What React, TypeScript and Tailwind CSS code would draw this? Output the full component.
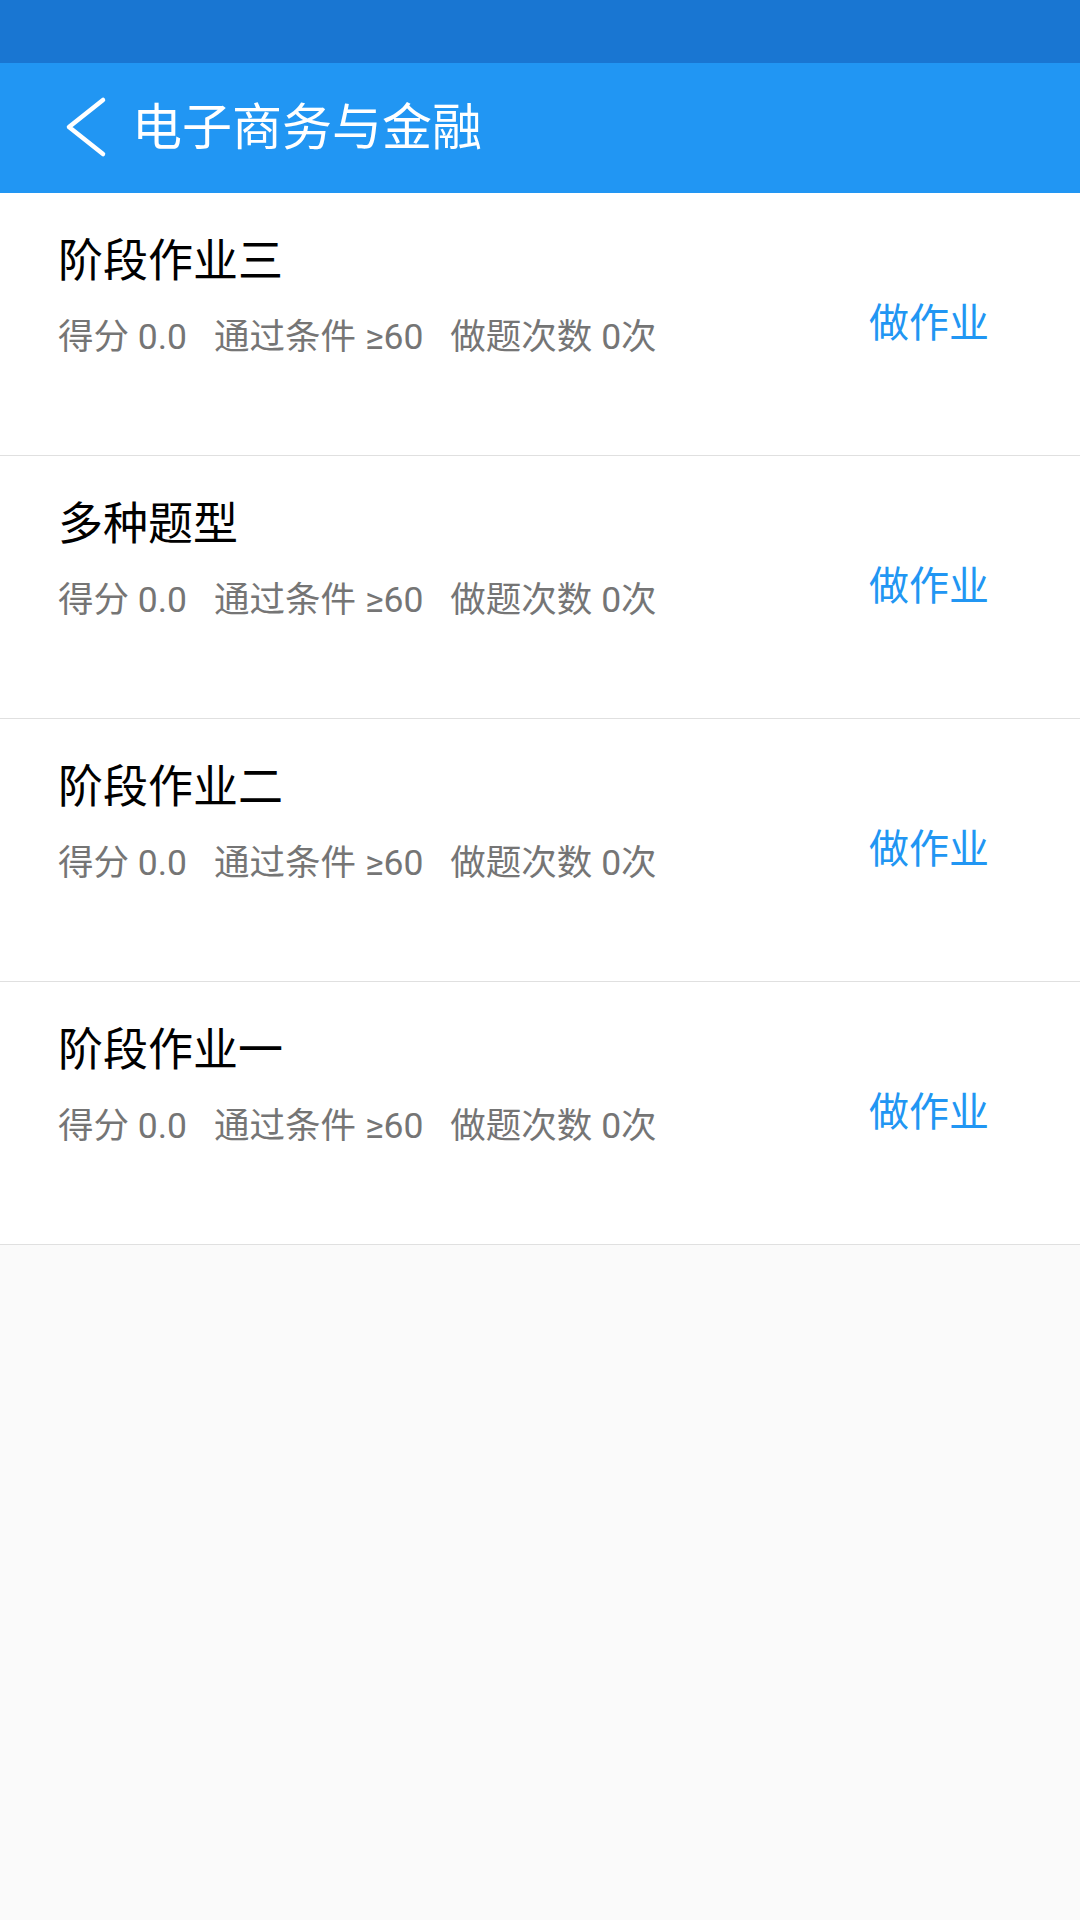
import React from "react";

const items = ["阶段作业三", "多种题型", "阶段作业二", "阶段作业一"];

export default function App() {
  return (
    <div
      className="min-h-[1920px] w-[1080px] bg-[#fafafa]"
      style={{ fontFamily: 'Roboto, "Noto Sans CJK SC", sans-serif' }}
    >
      <div className="h-[63px] bg-[#1976d2]" />
      <div className="flex h-[130px] items-center bg-[#2196f3] pl-[65px]">
        <svg width="44" height="64" viewBox="0 0 44 64" className="shrink-0">
          <path
            d="M38 4 L4 31 L38 58"
            fill="none"
            stroke="#ffffff"
            strokeWidth="4.5"
            strokeLinecap="round"
            strokeLinejoin="round"
          />
        </svg>
        <div className="ml-[23px] text-[50px] leading-[60px] text-white">
          电子商务与金融
        </div>
      </div>
      <div className="bg-white">
        {items.map((t) => (
          <div
            key={t}
            className="flex h-[263px] justify-between border-b border-[#e0e0e0] pl-[58px] pr-[91px]"
          >
            <div className="flex flex-col pt-[42px]">
              <div className="text-[45px] leading-[53px] text-black">{t}</div>
              <div className="mt-[27px] flex gap-[27px] text-[35.5px] leading-[44px] text-[#757575]">
                <span>得分 0.0</span>
                <span>通过条件 ≥60</span>
                <span>做题次数 0次</span>
              </div>
            </div>
            <div className="self-center text-[40px] leading-[50px] text-[#2196f3]">
              做作业
            </div>
          </div>
        ))}
      </div>
    </div>
  );
}
